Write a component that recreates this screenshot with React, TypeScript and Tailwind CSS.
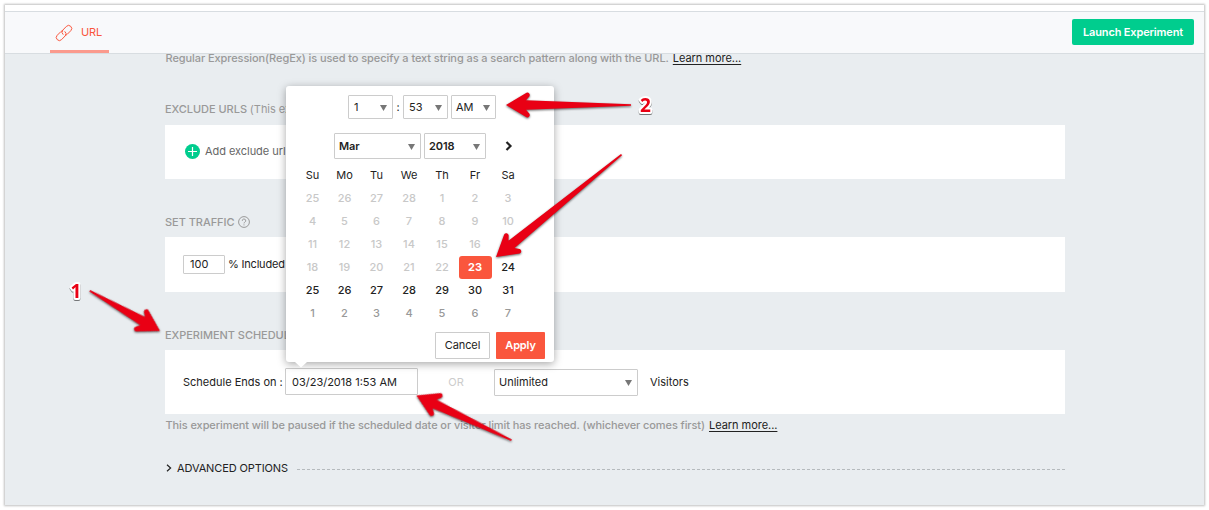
import type { ReactNode } from 'react';
import clsx from 'clsx';

interface Day {
  label: number;
  state: 'off' | 'on' | 'next' | 'selected';
}

const WEEKDAYS = ['Su', 'Mo', 'Tu', 'We', 'Th', 'Fr', 'Sa'];

// Six weeks, starting from Sunday 25 Feb 2018
const DAYS: Day[] = Array.from({ length: 42 }, (_, i) => {
  if (i < 4) return { label: 25 + i, state: 'off' };
  const day = i - 3;
  if (day > 31) return { label: day - 31, state: 'next' };
  if (day === 23) return { label: day, state: 'selected' };
  return { label: day, state: day < 23 ? 'off' : 'on' };
});

function Select({ value, className }: { value: string; className: string }) {
  return (
    <div className={clsx('flex items-center justify-between rounded-[1px] border border-[#ccc] bg-white', className)}>
      <span>{value}</span>
      <svg className="mt-0.5 h-[6px] w-[7px]" viewBox="0 0 7 6">
        <path d="M0 0h7L3.5 6z" fill="#777" />
      </svg>
    </div>
  );
}

function SectionTitle({ children }: { children: ReactNode }) {
  return (
    <h2 className="flex h-4 items-center text-[11px] font-medium tracking-[-0.04px] whitespace-pre text-[#999]">
      {children}
    </h2>
  );
}

function LearnMore() {
  return <a className="ml-1 font-normal tracking-[-0.04px] text-[#222] underline underline-offset-2">Learn more...</a>;
}

function LinkIcon() {
  return (
    <svg
      className="mt-[4px] size-[18px]"
      viewBox="0 0 18 18"
      fill="none"
      stroke="currentColor"
      strokeWidth="1"
      strokeLinecap="round"
    >
      <path d="M8 10.4a3 3 0 0 1-.2-4.3l3.6-3.7a3 3 0 0 1 4.4 4.3l-3.7 3.7a3 3 0 0 1-1.6.8" />
      <path d="M10 7.6a3 3 0 0 1 .2 4.3l-3.6 3.7a3 3 0 0 1-4.4-4.3l3.7-3.7a3 3 0 0 1 1.6-.8" />
    </svg>
  );
}

function DatePicker() {
  return (
    <div className="absolute top-[86px] left-[286px] flex h-[276px] w-[268px] flex-col rounded-[3px] bg-white text-[11px] text-[#222] shadow-[0_2px_9px_rgba(0,0,0,0.35)]">
      <div className="mt-[9px] ml-[62px] flex h-6 items-center">
        <Select value="1" className="h-6 w-[45px] px-[5px]" />
        <span className="w-[10px] text-center">:</span>
        <Select value="53" className="h-6 w-[45px] px-[5px]" />
        <Select value="AM" className="ml-[3px] h-6 w-[45px] pr-[5px] pl-1" />
      </div>
      <div className="mt-[14px] ml-12 flex h-[26px] items-center font-semibold tracking-[-0.1px]">
        <Select value="Mar" className="h-[26px] w-[87px] pr-[5px] pl-1" />
        <Select value="2018" className="ml-[3px] h-[26px] w-[62px] pr-[5px] pl-1" />
        <svg className="ml-[19px] h-[10px] w-[8px]" viewBox="0 0 8 10">
          <path d="M1.5 1l4 4-4 4" fill="none" stroke="#222" strokeWidth="2.2" />
        </svg>
      </div>
      <div className="mt-[5px] ml-[10.5px] grid grid-cols-[32px_32px_32px_33px_33px_33px_33px] text-center leading-[23px]">
        {WEEKDAYS.map((name) => (
          <span key={name}>{name}</span>
        ))}
        {DAYS.map(({ label, state }, i) => (
          <span
            key={i}
            className={clsx(
              'h-[23px]',
              state === 'off' && 'font-medium text-[#c8c8c8]',
              state === 'next' && 'font-medium text-[#999]',
              state === 'on' && 'font-medium tracking-[-0.1px]',
              state === 'selected' && 'rounded-[3px] bg-[#fa563d] font-bold text-white',
            )}
          >
            {label}
          </span>
        ))}
      </div>
      <div className="mt-[7px] mr-[9px] flex justify-end gap-[6px]">
        <button className="h-[27px] w-[55px] rounded-[1px] border border-[#ccc] tracking-[-0.1px]">Cancel</button>
        <button className="h-[27px] w-[49px] rounded-[1px] bg-[#fa563d] font-semibold tracking-[-0.15px] text-white">
          Apply
        </button>
      </div>
      <svg className="absolute top-[276px] left-[9px] h-[6px] w-[12px]" viewBox="0 0 12 6">
        <path d="M0 0h12L6 5.5z" fill="#fff" />
      </svg>
    </div>
  );
}

// Arrow pointing at (x, y); the tail leaves in the direction of angle
function Arrow({ x, y, angle, length }: { x: number; y: number; angle: number; length: number }) {
  return (
    <path
      transform={`translate(${x} ${y}) rotate(${angle})`}
      d={`M0 0L20.5 -12.2A2.4 2.4 0 0 1 23.5 -8.8L20 -4.8L${length} -0.8V0.8L20 4.8L23.5 8.8A2.4 2.4 0 0 1 20.5 12.2Z`}
    />
  );
}

function Annotations() {
  return (
    <svg className="pointer-events-none absolute inset-0 h-[510px] w-[1209px]" viewBox="0 0 1209 510">
      <g className="drop-shadow-[0_1px_1px_rgba(0,0,0,0.6)]" fill="#e90014">
        <Arrow x={506} y={105} angle={0} length={125} />
        <Arrow x={496} y={257} angle={-39.2} length={162} />
        <Arrow x={160} y={331} angle={209.8} length={81} />
        <Arrow x={416.5} y={395.5} angle={25.2} length={105} />
      </g>
      <g
        className="font-['Open_Sans',sans-serif] text-[19px] font-bold drop-shadow-[0_1px_0.5px_rgba(0,0,0,0.5)]"
        fill="#e90014"
        stroke="#fff"
        strokeWidth="4"
        strokeLinejoin="round"
        paintOrder="stroke"
      >
        <text x="70.5" y="298">1</text>
        <text x="640" y="112">2</text>
      </g>
    </svg>
  );
}

export default function App() {
  return (
    <div className="relative h-[510px] w-[1209px] overflow-hidden bg-white pt-[5px] pl-[5px] font-[Inter,sans-serif] text-[11px] text-[#222]">
      <div className="flex h-[500px] w-[1199px] flex-col bg-[#e9edf0] shadow-[0_0_2px_1px_rgba(0,0,0,0.25)]">
        <div className="h-[6px] bg-white" />
        <header className="flex h-[43px] justify-between border-y border-[#d8dde1] bg-[#f8f9fb]">
          <div className="ml-[45px] flex h-[41px] w-[59px] items-center border-b-[3px] border-[#fb9a8d] pl-[5px] text-[#fa563d]">
            <LinkIcon />
            <span className="mt-0.5 ml-[8px] tracking-[-0.1px]">URL</span>
          </div>
          <button className="mt-[7px] mr-[10px] h-[26px] w-[122px] rounded-[2px] bg-[#00cd8e] font-semibold tracking-[-0.15px] text-white">
            Launch Experiment
          </button>
        </header>

        <main className="ml-[160px] w-[900px]">
          <p className="h-[9px] pl-[0.5px] leading-[9px] font-medium tracking-[-0.08px] text-[#999]">
            Regular Expression(RegEx) is used to specify a text string as a search pattern along with the URL.
            <LearnMore />
          </p>

          <section className="mt-[38px]">
            <SectionTitle>
              EXCLUDE URLS <span className="font-normal">(This excludes</span>
            </SectionTitle>
            <div className="mt-2 flex h-[54px] items-center bg-white pl-5 text-[#666]">
              <svg className="-mt-px size-[15px]" viewBox="0 0 15 15">
                <circle cx="7.5" cy="7.5" r="7.5" fill="#00cd8e" />
                <path d="M7.5 3v9M3 7.5h9" stroke="#fff" strokeWidth="1.2" />
              </svg>
              <span className="-mt-px ml-[5px] tracking-[-0.05px]">Add exclude url</span>
            </div>
          </section>

          <section className="mt-[35px]">
            <SectionTitle>
              SET TRAFFIC
              <svg className="ml-[3px] size-[12px]" viewBox="0 0 12 12" fill="none" stroke="#999">
                <circle cx="6" cy="6" r="5.4" />
                <path d="M4.3 4.8a1.7 1.7 0 1 1 2.5 1.4c-.6.3-.8.6-.8 1.2M6 8.4v1" />
              </svg>
            </SectionTitle>
            <div className="mt-[7px] flex h-[55px] items-center bg-white pl-[18px]">
              <div className="h-[19px] w-[42px] rounded-[1px] border border-[#ccc] pl-[6px] leading-[17px]">100</div>
              <span className="ml-[3px] tracking-[-0.2px]">% Included</span>
            </div>
          </section>

          <section className="mt-[35px]">
            <SectionTitle>EXPERIMENT SCHEDULE</SectionTitle>
            <div className="mt-[7px] flex h-16 items-center bg-white pl-[18px]">
              <span className="w-[102px] whitespace-nowrap">Schedule Ends on :</span>
              <div className="-mt-[2px] h-[27px] w-[133px] rounded-[1px] border border-[#ccc] pl-[6px] leading-[26px]">
                03/23/2018 1:53 AM
              </div>
              <span className="w-[76px] text-center text-[#ccc]">OR</span>
              <Select value="Unlimited" className="h-[27px] w-[144px] pr-[5px] pl-1" />
              <span className="ml-3">Visitors</span>
            </div>
            <p className="mt-[3px] h-4 pl-[0.5px] leading-4 font-medium tracking-[-0.09px] text-[#999]">
              This experiment will be paused if the scheduled date or visitor limit has reached. (whichever comes first)
              <LearnMore />
            </p>
          </section>

          <div className="mt-[27px] flex h-4 items-center">
            <svg className="ml-px h-2 w-[6px]" viewBox="0 0 6 8">
              <path d="M1 .8L4.6 4 1 7.2" fill="none" stroke="#222" strokeWidth="1.2" />
            </svg>
            <span className="ml-[5px] tracking-[-0.12px]">ADVANCED OPTIONS</span>
            <div className="mt-0.5 ml-[9px] flex-1 border-t border-dashed border-[#b5babd]" />
          </div>
        </main>
      </div>

      <DatePicker />
      <Annotations />
    </div>
  );
}
